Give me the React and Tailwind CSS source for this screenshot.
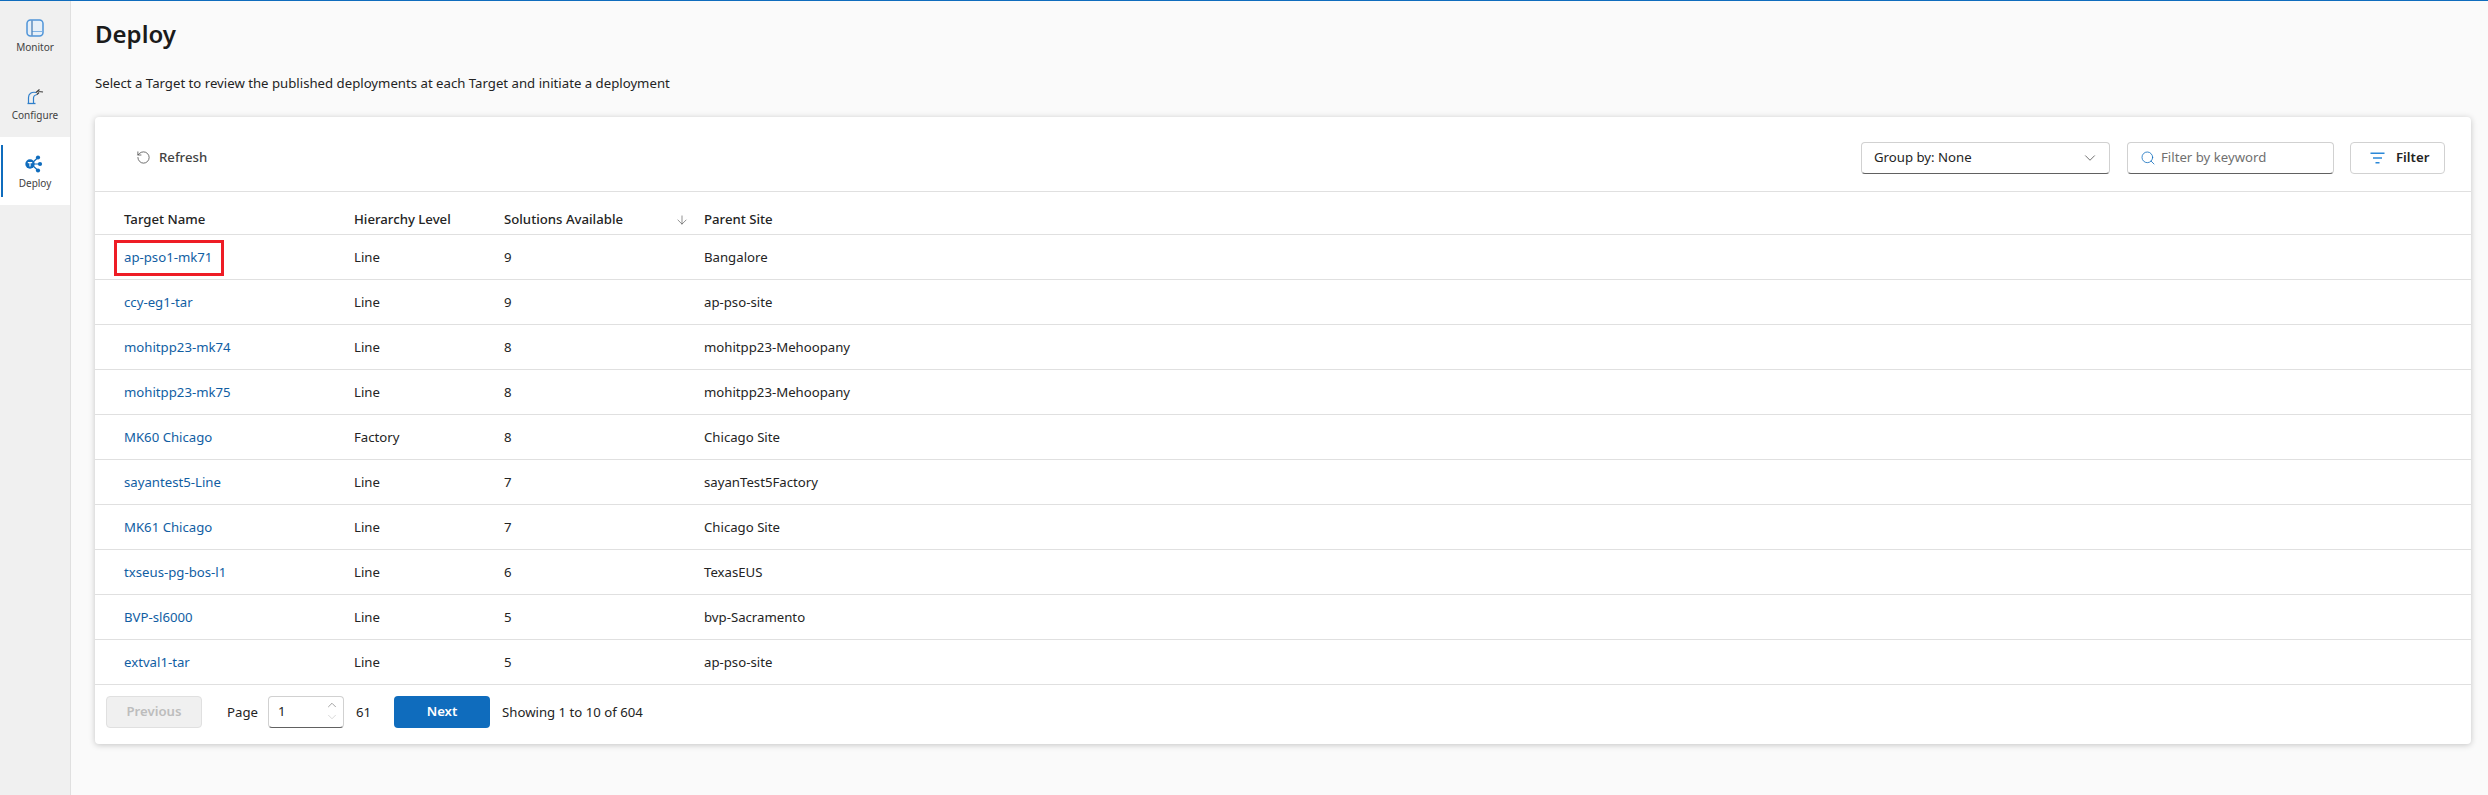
import { ArrowDown, ChevronDown, ChevronUp, RotateCcw, Search } from 'lucide-react';

const rows = [
  ['ap-pso1-mk71', 'Line', '9', 'Bangalore'],
  ['ccy-eg1-tar', 'Line', '9', 'ap-pso-site'],
  ['mohitpp23-mk74', 'Line', '8', 'mohitpp23-Mehoopany'],
  ['mohitpp23-mk75', 'Line', '8', 'mohitpp23-Mehoopany'],
  ['MK60 Chicago', 'Factory', '8', 'Chicago Site'],
  ['sayantest5-Line', 'Line', '7', 'sayanTest5Factory'],
  ['MK61 Chicago', 'Line', '7', 'Chicago Site'],
  ['txseus-pg-bos-l1', 'Line', '6', 'TexasEUS'],
  ['BVP-sl6000', 'Line', '5', 'bvp-Sacramento'],
  ['extval1-tar', 'Line', '5', 'ap-pso-site'],
];

function MonitorIcon() {
  return (
    <svg width="18" height="18" viewBox="0 0 18 18" fill="none">
      <rect x="1" y="1" width="16" height="16" rx="3.5" fill="#e6eff8" stroke="#4f94d8" strokeWidth="1.5" />
      <path d="M11 12.5H16.5M6 12.5H11" stroke="#7fb2e5" strokeWidth="1.2" />
      <path d="M6 1.5V16.5" stroke="#4a7fb5" strokeWidth="1.3" />
    </svg>
  );
}

function ConfigureIcon() {
  return (
    <svg width="18" height="17" viewBox="0 0 18 17" fill="none">
      <path d="M1.5 15.5H9.5" stroke="#2f7fcb" strokeWidth="1.3" />
      <path d="M2.5 15V9.5C2.5 6 5.5 3.5 10 4.5M7.5 15V10C7.5 8 9 7 11 6.5" stroke="#2f7fcb" strokeWidth="1.2" />
      <path d="M10 4.5L13.5 1.5M11 6.5L13 4.5M12.5 3.5L17 4" stroke="#3a3a3a" strokeWidth="1.2" />
    </svg>
  );
}

function DeployIcon() {
  return (
    <svg width="18" height="18" viewBox="0 0 18 18" fill="none" className="-ml-[3px]">
      <path d="M6 9L13 2.5M6 9H15M6 9L13 15.5" stroke="#0f6cbd" strokeWidth="1.2" />
      <circle cx="5" cy="9" r="4.7" fill="#0f6cbd" />
      <path d="M2.8 7.6H7.2M5 7.6V11.5" stroke="#fff" strokeWidth="1.2" />
      <circle cx="13" cy="2.5" r="2.1" fill="#0f6cbd" />
      <circle cx="15" cy="9" r="2.1" fill="#0f6cbd" />
      <circle cx="13" cy="15.5" r="2.1" fill="#0f6cbd" />
    </svg>
  );
}

function FilterIcon() {
  return (
    <svg width="15" height="12" viewBox="0 0 15 12" fill="none">
      <path d="M0.5 1.2H14.5M3 6H12M5.5 10.8H9.5" stroke="#2b88d8" strokeWidth="1.5" />
    </svg>
  );
}

function NavItem({ icon, label, active }) {
  return (
    <div className={`relative flex h-[68px] flex-col items-center pt-[18px] ${active ? 'bg-white' : ''}`}>
      {active && <div className="absolute left-[1px] top-[8px] h-[52px] w-[2px] bg-[#0f6cbd]" />}
      <div className="flex h-[18px] items-center">{icon}</div>
      <div className="mt-[3px] text-[10px] leading-[14px] text-[#424242]">{label}</div>
    </div>
  );
}

export default function App() {
  return (
    <div className="flex h-[795px] flex-col border-t border-[#0f6cbd] bg-[#fafafa] font-['Noto_Sans',sans-serif] text-[13.2px] text-[#242424]">
      <div className="flex min-h-0 flex-1">
        <nav className="w-[71px] shrink-0 border-r border-[#e0e0e0] bg-[#f0f0f0]">
          <div className="h-[794px]">
            <NavItem icon={<MonitorIcon />} label="Monitor" />
            <NavItem icon={<ConfigureIcon />} label="Configure" />
            <NavItem icon={<DeployIcon />} label="Deploy" active />
          </div>
        </nav>

        <main className="flex-1 pl-[24px] pr-[17px]">
          <h1 className="mt-[15px] text-[24px] font-semibold leading-[36px] text-[#1b1b1b]">Deploy</h1>
          <p className="mt-[21px] leading-[20px]">
            Select a Target to review the published deployments at each Target and initiate a deployment
          </p>

          <section className="mt-[24px] rounded-[4px] bg-white shadow-[0_1px_6px_rgba(0,0,0,0.22)]">
            <div className="flex h-[75px] items-center border-b border-[#e0e0e0] pl-[41px] pr-[26px] pt-[7px]">
              <RotateCcw size={15} strokeWidth={1.2} className="text-[#424242]" />
              <span className="ml-[8px] font-medium text-[#424242]">Refresh</span>
              <div className="ml-auto flex h-[32px] w-[249px] items-center justify-between rounded-[4px] border border-[#d1d1d1] border-b-[#616161] pl-[12px] pr-[10px]">
                Group by: None
                <ChevronDown size={18} strokeWidth={1} className="text-[#424242]" />
              </div>
              <div className="ml-[17px] flex h-[32px] w-[207px] items-center rounded-[4px] border border-[#d1d1d1] border-b-[#616161] pl-[12px] text-[#707070]">
                <Search size={16} strokeWidth={1.2} className="text-[#0f6cbd]" />
                <span className="ml-[5px]">Filter by keyword</span>
              </div>
              <div className="ml-[16px] flex h-[32px] w-[95px] items-center rounded-[4px] border border-[#d1d1d1] pl-[19px] font-semibold">
                <FilterIcon />
                <span className="ml-[11px]">Filter</span>
              </div>
            </div>

            <table className="w-full table-fixed border-collapse">
              <colgroup>
                <col className="w-[259px]" />
                <col className="w-[150px]" />
                <col className="w-[200px]" />
                <col />
              </colgroup>
              <thead>
                <tr className="h-[42px] border-b border-[#e0e0e0] text-left">
                  <th className="pl-[29px] pt-[14px] font-medium">Target Name</th>
                  <th className="pt-[14px] font-medium">Hierarchy Level</th>
                  <th className="pt-[14px] font-medium">
                    <div className="flex items-center justify-between pr-[15px]">
                      Solutions Available
                      <ArrowDown size={14} strokeWidth={1} className="text-[#424242]" />
                    </div>
                  </th>
                  <th className="pt-[14px] font-medium">Parent Site</th>
                </tr>
              </thead>
              <tbody>
                {rows.map((r, i) => (
                  <tr key={r[0]} className="h-[45px] border-b border-[#e0e0e0]">
                    <td className="pl-[29px] pt-[2px]">
                      <span className="relative text-[#115ea3]">
                        {r[0]}
                        {i === 0 && <span className="absolute -left-[10px] -top-[8px] h-[36px] w-[110px] border-[3px] border-[#ee1c25]" />}
                      </span>
                    </td>
                    <td className="pt-[2px]">{r[1]}</td>
                    <td className="pt-[2px]">{r[2]}</td>
                    <td className="pt-[2px]">{r[3]}</td>
                  </tr>
                ))}
              </tbody>
            </table>

            <div className="flex h-[59px] items-start pl-[11px] pt-[11px]">
              <div className="flex h-[32px] w-[96px] items-center justify-center rounded-[4px] border border-[#e0e0e0] bg-[#f0f0f0] font-semibold text-[#bdbdbd]">Previous</div>
              <span className="ml-[25px] leading-[32px]">Page</span>
              <div className="relative ml-[10px] flex h-[32px] w-[76px] items-center rounded-[4px] border border-[#d1d1d1] border-b-[#616161] pl-[9px]">
                1
                <div className="absolute right-[4px] top-[1px] flex flex-col">
                  <ChevronUp size={14} strokeWidth={1} className="-mb-[2px] text-[#616161]" />
                  <ChevronDown size={14} strokeWidth={1} className="text-[#bdbdbd]" />
                </div>
              </div>
              <span className="ml-[12px] leading-[32px]">61</span>
              <div className="ml-[23px] flex h-[32px] w-[96px] items-center justify-center rounded-[4px] bg-[#0f6cbd] font-semibold text-white">Next</div>
              <span className="ml-[12px] leading-[32px]">Showing 1 to 10 of 604</span>
            </div>
          </section>
        </main>
      </div>
    </div>
  );
}
